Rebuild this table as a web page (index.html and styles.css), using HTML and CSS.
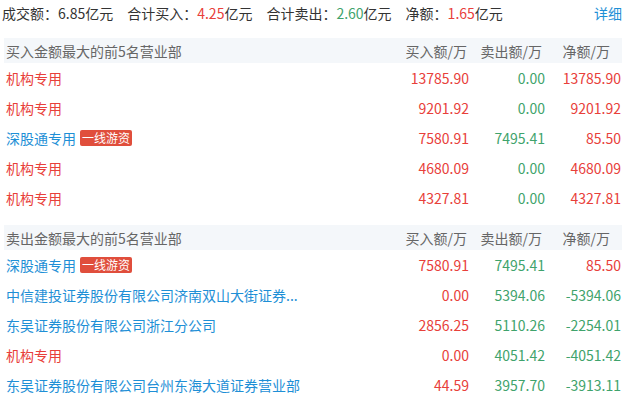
FILE: index.html
```html
<!DOCTYPE html>
<html lang="zh-CN">
<head>
<meta charset="utf-8">
<title>龙虎榜营业部</title>
<link rel="stylesheet" href="styles.css">
</head>
<body>
<div class="page">
  <div class="summary">
    <div class="stats">
      <span class="stat">成交额：<span class="num">6.85</span>亿元</span>
      <span class="stat">合计买入：<span class="num red">4.25</span>亿元</span>
      <span class="stat">合计卖出：<span class="num green">2.60</span>亿元</span>
      <span class="stat">净额：<span class="num red">1.65</span>亿元</span>
    </div>
    <a class="more">详细</a>
  </div>

  <section class="block">
    <div class="row head">
      <div class="name">买入金额最大的前5名营业部</div>
      <div class="c c1">买入额/万</div>
      <div class="c c2">卖出额/万</div>
      <div class="c c3">净额/万</div>
    </div>
    <div class="row"><div class="name"><span class="txt red">机构专用</span></div><div class="c red">13785.90</div><div class="c green">0.00</div><div class="c red">13785.90</div></div>
    <div class="row"><div class="name"><span class="txt red">机构专用</span></div><div class="c red">9201.92</div><div class="c green">0.00</div><div class="c red">9201.92</div></div>
    <div class="row"><div class="name"><span class="txt blue">深股通专用</span><span class="tag">一线游资</span></div><div class="c red">7580.91</div><div class="c green">7495.41</div><div class="c red">85.50</div></div>
    <div class="row"><div class="name"><span class="txt red">机构专用</span></div><div class="c red">4680.09</div><div class="c green">0.00</div><div class="c red">4680.09</div></div>
    <div class="row"><div class="name"><span class="txt red">机构专用</span></div><div class="c red">4327.81</div><div class="c green">0.00</div><div class="c red">4327.81</div></div>
  </section>

  <section class="block second">
    <div class="row head">
      <div class="name">卖出金额最大的前5名营业部</div>
      <div class="c c1">买入额/万</div>
      <div class="c c2">卖出额/万</div>
      <div class="c c3">净额/万</div>
    </div>
    <div class="row"><div class="name"><span class="txt blue">深股通专用</span><span class="tag">一线游资</span></div><div class="c red">7580.91</div><div class="c green">7495.41</div><div class="c red">85.50</div></div>
    <div class="row"><div class="name"><span class="txt blue" title="中信建投证券股份有限公司济南双山大街证券营业部">中信建投证券股份有限公司济南双山大街证券...</span></div><div class="c red">0.00</div><div class="c green">5394.06</div><div class="c green">-5394.06</div></div>
    <div class="row"><div class="name"><span class="txt blue">东吴证券股份有限公司浙江分公司</span></div><div class="c red">2856.25</div><div class="c green">5110.26</div><div class="c green">-2254.01</div></div>
    <div class="row"><div class="name"><span class="txt red">机构专用</span></div><div class="c red">0.00</div><div class="c green">4051.42</div><div class="c green">-4051.42</div></div>
    <div class="row"><div class="name"><span class="txt blue">东吴证券股份有限公司台州东海大道证券营业部</span></div><div class="c red">44.59</div><div class="c green">3957.70</div><div class="c green">-3913.11</div></div>
  </section>
</div>
</body>
</html>
```

FILE: styles.css
```css
* { box-sizing: border-box; }
html, body { margin: 0; padding: 0; background: #fff; }
body {
  font-family: "Noto Sans CJK SC", "Noto Sans", sans-serif;
  font-size: 14px;
  color: #333;
}
.page { padding: 0 4px; }

.summary {
  height: 26px;
  margin-bottom: 12px;
  display: flex;
  align-items: center;
  justify-content: space-between;
  margin-left: -2px;
}
.stats { display: flex; gap: 14px; }
.more { color: #1e8fd6; cursor: pointer; }

.red { color: #e8403a; }
.green { color: #3fa36c; }
.blue { color: #1e8fd6; }

.block { display: flex; flex-direction: column; }
.block.second { margin-top: 12px; }

.row {
  display: grid;
  grid-template-columns: 1fr 76px 76px 76px;
  align-items: center;
  height: 30px;
  padding: 0 1px 0 2px;
}
.row.head {
  height: 25px;
  background: #f4f7fa;
  color: #666;
}
.name {
  display: flex;
  align-items: center;
  min-width: 0;
  white-space: nowrap;
}
.txt {
  display: block;
  white-space: nowrap;
}
.tag {
  margin-left: 4px;
  height: 16px;
  line-height: 16px;
  padding: 0 2px;
  font-size: 12px;
  color: #fff;
  background: #e04e3c;
  border-radius: 2px;
}
.c { text-align: right; white-space: nowrap; }
.head .c1 { padding-right: 2px; }
.head .c2 { padding-right: 3px; }
.head .c3 { padding-right: 11px; }
```
